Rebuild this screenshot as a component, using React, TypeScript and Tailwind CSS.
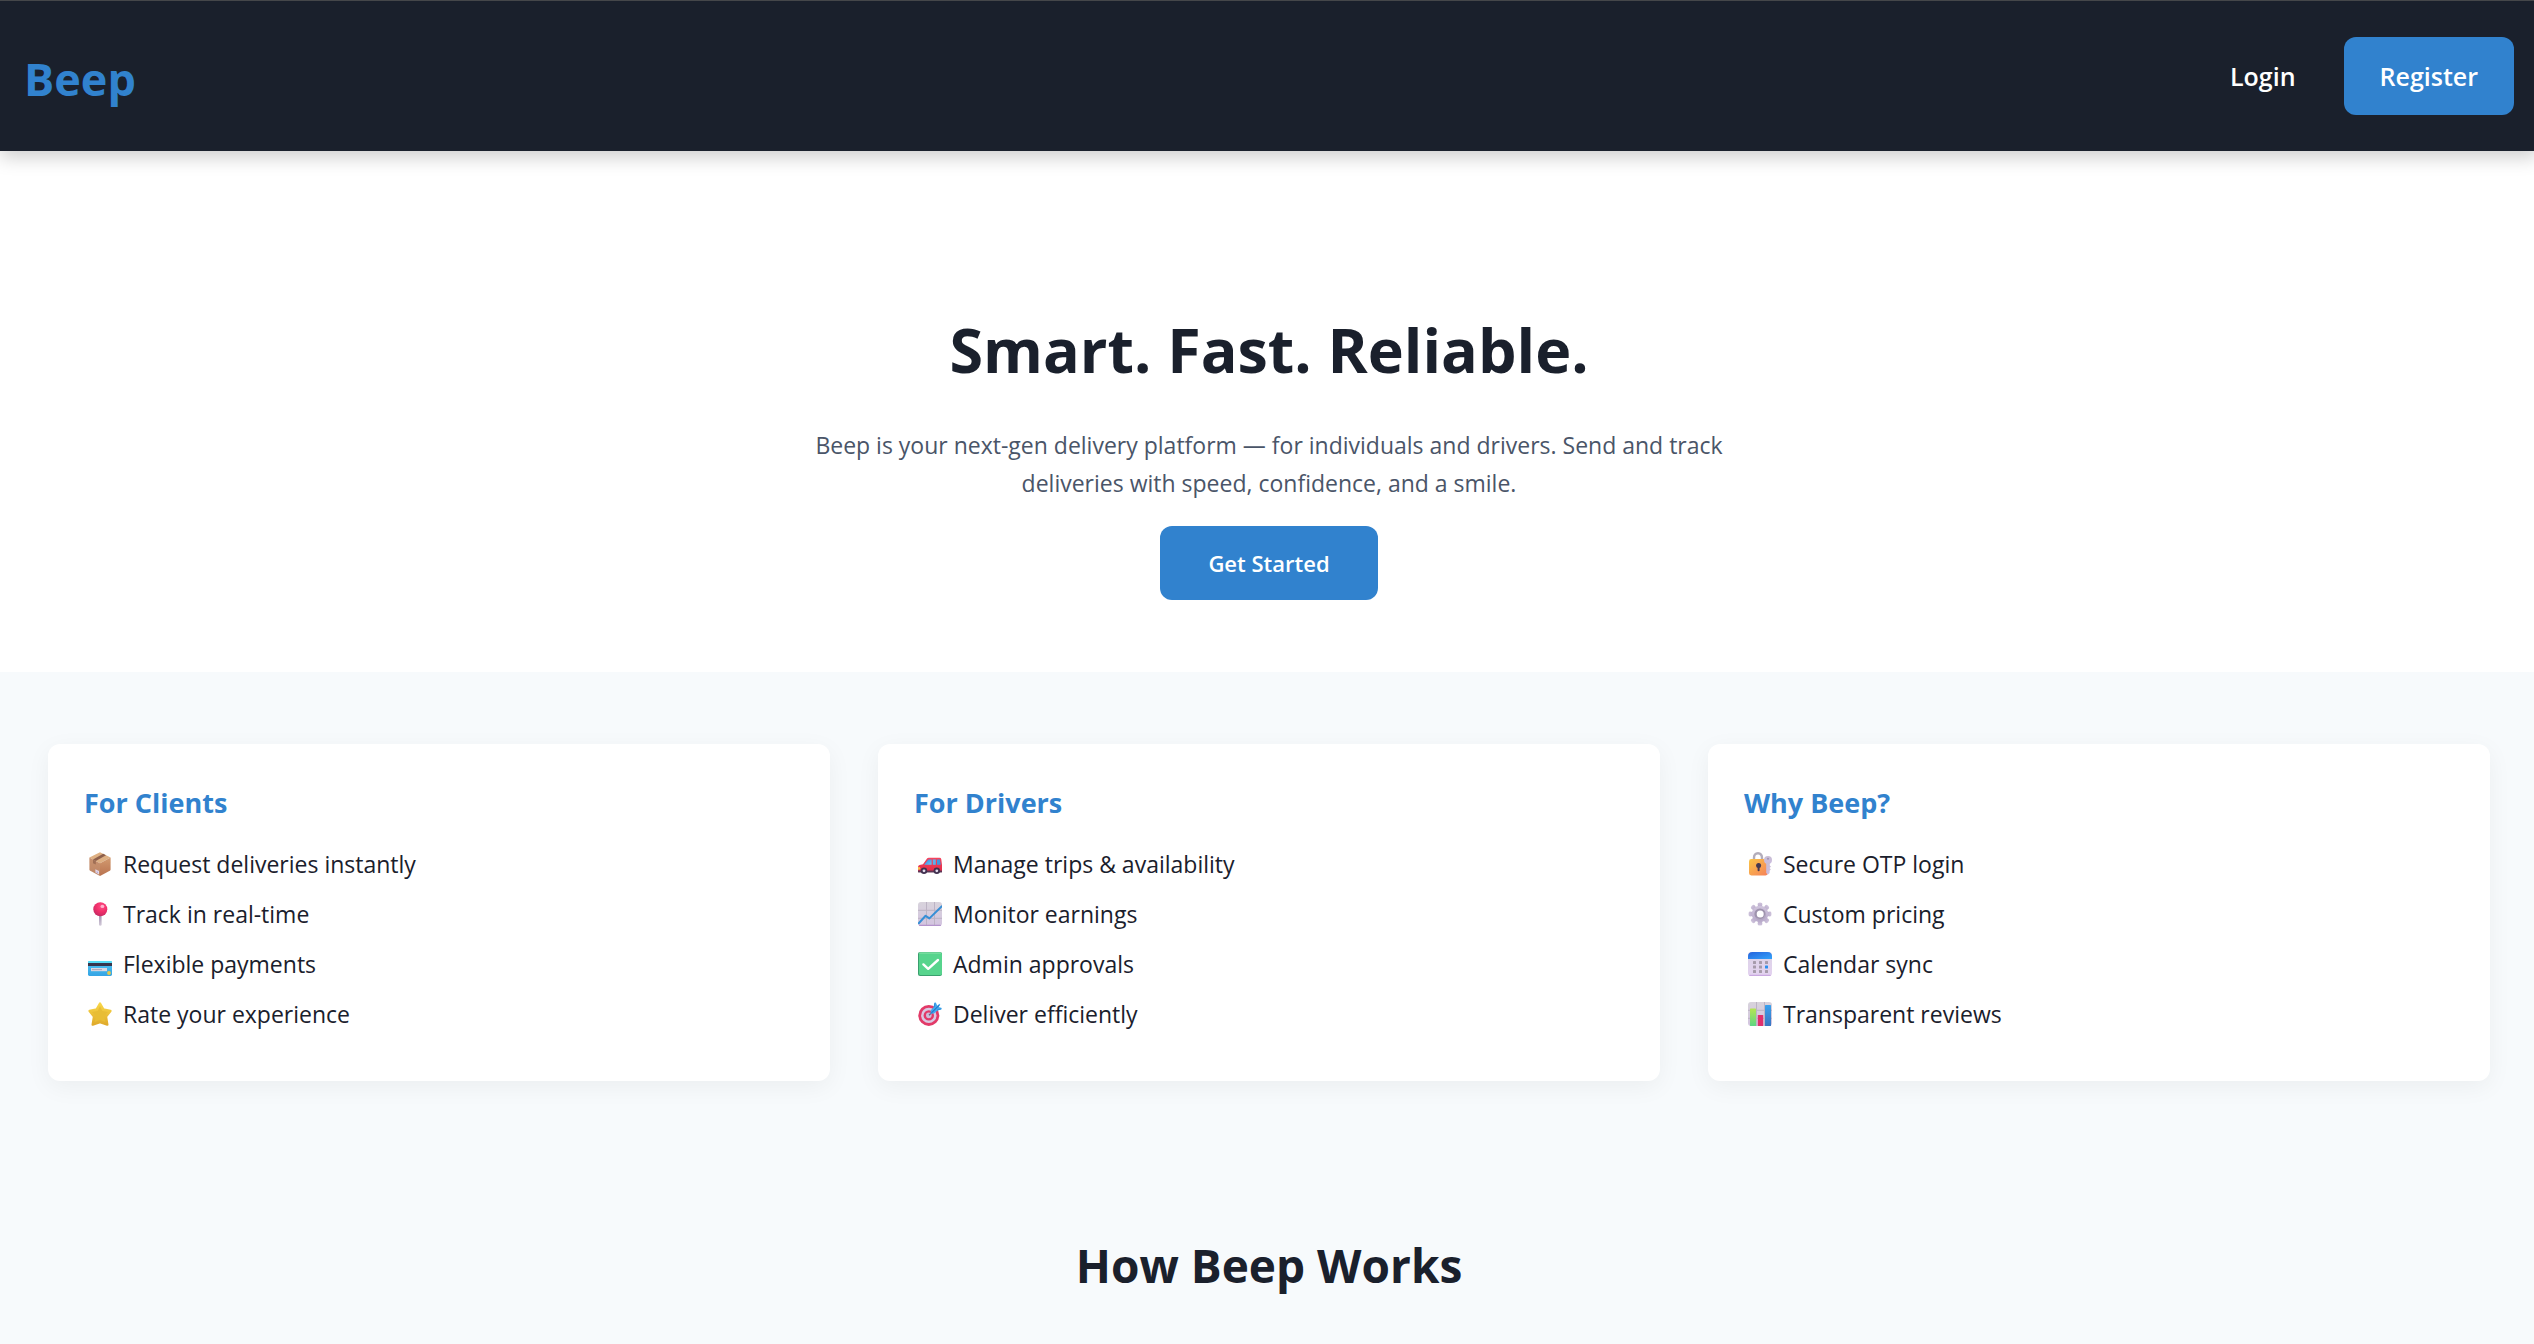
import type { ReactNode } from 'react';

function Gradient({ id, from, to, diagonal = false }: { id: string; from: string; to: string; diagonal?: boolean }) {
  return (
    <linearGradient id={id} x1="0" y1="0" x2={diagonal ? '1' : '0'} y2="1">
      <stop offset="0" stopColor={from} />
      <stop offset="1" stopColor={to} />
    </linearGradient>
  );
}

function Icon({ children }: { children: ReactNode }) {
  return (
    <svg viewBox="0 0 24 24" className="ml-1 size-6 shrink-0" aria-hidden="true">
      {children}
    </svg>
  );
}

const PackageIcon = () => (
  <Icon>
    <defs>
      <Gradient id="pkg-l" from="#c99370" to="#bd8565" />
      <Gradient id="pkg-r" from="#d29a6f" to="#b97350" />
    </defs>
    <path d="M12 0.2 22.6 5.6 12 11.2 1.4 5.6Z" fill="#deb083" />
    <path d="M1.4 5.6 12 11.2V24L2.2 18.8Q1.4 18.3 1.4 17.4Z" fill="url(#pkg-l)" />
    <path d="M22.6 5.6 12 11.2V24L21.8 18.8Q22.6 18.3 22.6 17.4Z" fill="url(#pkg-r)" />
    <path d="M15.2 1.8 18 3.2 7.8 9 5 7.5Z" fill="#8d5f4b" />
    <path d="M5 7.5 7.8 9V12.6L5 11.2Z" fill="#a06f55" />
    <path d="M7.4 17.2 11 19V22.4L7.4 20.6Z" fill="#e2d8ea" />
    <path d="M8.6 19.2 10 20V21.2L8.6 20.4Z" fill="#b9a6cf" />
  </Icon>
);

const PinIcon = () => (
  <Icon>
    <defs>
      <radialGradient id="pin-h" cx="0.6" cy="0.3" r="0.75">
        <stop offset="0" stopColor="#ff4f87" />
        <stop offset="0.5" stopColor="#f2306b" />
        <stop offset="1" stopColor="#c22a63" />
      </radialGradient>
      <Gradient id="pin-n" from="#9f8fae" to="#d3cbda" />
    </defs>
    <path d="M11 12h2.6v10.6q0 1.2-1.3 1.2T11 22.6Z" fill="url(#pin-n)" />
    <circle cx="12.3" cy="7.2" r="7" fill="url(#pin-h)" />
    <ellipse cx="14.4" cy="4.4" rx="1.9" ry="1.7" fill="#ffb3cd" />
  </Icon>
);

const CardIcon = () => (
  <Icon>
    <defs>
      <Gradient id="card-b" from="#4fc3f3" to="#35a4e4" />
    </defs>
    <rect x="0" y="9" width="24" height="15" rx="1.4" fill="url(#card-b)" />
    <path d="M1.4 9h21.2q1.4 0 1.4 1.4V11H0v-.6Q0 9 1.4 9Z" fill="#55dcf5" />
    <rect x="0" y="11" width="24" height="3" fill="#37354d" />
    <rect x="3" y="16" width="16" height="3.2" fill="#dcd9e2" />
    <rect x="4" y="17.2" width="10" height="0.9" fill="#a9a0b2" />
    <circle cx="21" cy="21" r="1.9" fill="#e9c94a" />
  </Icon>
);

const StarIcon = () => (
  <Icon>
    <defs>
      <Gradient id="star-f" from="#f8d648" to="#e0ab2c" />
    </defs>
    <path
      d="M12 1.6 15.3 7.4 22.4 8.9 18 14.6 19.3 22.6 12 20.2 4.7 22.6 6 14.6 1.6 8.9 8.7 7.4Z"
      fill="url(#star-f)"
      stroke="url(#star-f)"
      strokeWidth="2.4"
      strokeLinejoin="round"
    />
    <path d="M12 4 14.3 9 20 9.9 16.3 14 17.3 20 12 17.8 6.7 20 7.7 14 4 9.9 9.7 9Z" fill="#e8bd35" />
  </Icon>
);

const CarIcon = () => (
  <Icon>
    <defs>
      <Gradient id="car-b" from="#f5455f" to="#e22a48" />
      <Gradient id="car-w" from="#2f86dd" to="#6fc4f5" diagonal />
    </defs>
    <path d="M9.2 6.3Q9.8 5.8 10.6 5.8H21.6Q23 5.8 23.3 7.2L24 13V18.6Q24 19.8 22.8 19.8H1.4Q0 19.8 0 18.4V15Q0 13.4 1.6 13L5 12.3Z" fill="url(#car-b)" />
    <path d="M10.3 7.4H13.6V12.8H6.2Z" fill="url(#car-w)" />
    <path d="M14.8 7.4H17.8V12.8H14.8Z" fill="#58b1ee" />
    <path d="M19 7.4H21.9L22.7 12.8H19Z" fill="#3f97e0" />
    <path d="M0 15.2Q2.4 14.8 2.4 16.4T0 17.8Z" fill="#f9c04d" />
    <path d="M0 18.6H24V20Q24 20.6 23.2 20.6H.9Q0 20.6 0 20Z" fill="#5e3656" />
    <circle cx="6" cy="18.8" r="3.2" fill="#40304f" />
    <circle cx="6" cy="18.8" r="1.4" fill="#e4dcec" />
    <circle cx="18.8" cy="18.8" r="3.2" fill="#40304f" />
    <circle cx="18.8" cy="18.8" r="1.4" fill="#e4dcec" />
  </Icon>
);

const GridPaper = ({ id }: { id: string }) => (
  <>
    <defs>
      <Gradient id={id} from="#d8d3dc" to="#d3c4e0" />
    </defs>
    <rect width="24" height="24" rx="3" fill={`url(#${id})`} />
    <path d="M8.5 0V24M16.5 0V24M0 8.3H24M0 16.3H24" stroke="#bcb3c4" strokeWidth="1" fill="none" />
  </>
);

const ChartUpIcon = () => (
  <Icon>
    <GridPaper id="chart-up" />
    <path d="M1.600 23.3H22.4" stroke="#b394cc" strokeWidth="1.2" strokeLinecap="round" />
    <path d="M0.8 21.2 7.6 13.8 11.4 16.4 23.6 4.4" stroke="#368fd6" strokeWidth="2" fill="none" strokeLinejoin="round" strokeLinecap="round" />
  </Icon>
);

const CheckIcon = () => (
  <Icon>
    <rect width="24" height="24" rx="2" fill="#3a9f6e" />
    <rect x="1" y="0.6" width="23" height="22.4" rx="1.6" fill="#57d48d" />
    <path d="M1.5 1H22.5" stroke="#8fe6ad" strokeWidth="1" strokeLinecap="round" />
    <path d="M5.4 12.4 10.2 16.8 20 8" stroke="#fff" strokeWidth="2.4" fill="none" strokeLinecap="round" strokeLinejoin="round" />
  </Icon>
);

const TargetIcon = () => (
  <Icon>
    <circle cx="10.8" cy="13.4" r="10.5" fill="#e23a68" />
    <circle cx="10.8" cy="13.4" r="7.7" fill="#d9c9e2" />
    <circle cx="10.8" cy="13.4" r="5.2" fill="#e23a68" />
    <circle cx="10.8" cy="13.4" r="2.8" fill="#cdbdd8" />
    <path d="M11 13.3 14 10.4" stroke="#6b5a80" strokeWidth="1.2" />
    <path d="M12.4 11.8 12.8 8.3 15.8 5 16.2 0.8 17.8 0.6 19.3 3.8 21.4 1.8 22.3 2.8 20.6 5 23.8 6 23.4 7.6 19.6 8.4 16 11.6Z" fill="#42a9ee" />
    <path d="M13.4 10.8 21 3.4" stroke="#2477c9" strokeWidth="1.1" />
    <path d="M16 5.2 17 1.4M19 8.2 22.8 6.9" stroke="#2d86d4" strokeWidth="0.9" />
  </Icon>
);

const LockIcon = () => (
  <Icon>
    <defs>
      <Gradient id="lock-b" from="#fbc545" to="#f5805a" diagonal />
      <Gradient id="lock-k" from="#c9bdd3" to="#cbbde0" />
    </defs>
    <path d="M6 9V6Q6 1.3 10 1.3T14 6V9" stroke="#b3adba" strokeWidth="2.4" fill="none" />
    <rect x="1" y="7" width="19" height="16.4" rx="2.4" fill="url(#lock-b)" />
    <circle cx="10.6" cy="13.6" r="2.5" fill="#443750" />
    <path d="M9.6 14h2v4.5q0 .8-1 .8t-1-.8Z" fill="#443750" />
    <circle cx="20" cy="8" r="4" fill="url(#lock-k)" />
    <path d="M18.2 10.5H21.8V13.5L23 14.6 21.6 16 22.8 17.4 21.6 18.8V21L20 22.4 18.2 21Z" fill="url(#lock-k)" />
    <circle cx="20" cy="6.8" r="1" fill="#a192b0" />
  </Icon>
);

const GearIcon = () => (
  <Icon>
    <defs>
      <Gradient id="gear-b" from="#cfc4dc" to="#b9abcb" />
    </defs>
    {[0, 45, 90, 135, 180, 225, 270, 315].map((angle) => (
      <path key={angle} d="M10 5 9.6 2Q9.5 .5 12 .5T14.400 2L14 5Z" fill="url(#gear-b)" transform={`rotate(${angle} 12 12)`} />
    ))}
    <circle cx="12" cy="12" r="8.3" fill="url(#gear-b)" />
    <circle cx="12" cy="12" r="5.6" fill="#9f94ae" />
    <path d="M8 16A5.6 5.6 0 0 0 17.4 13.4" stroke="#b3a7c2" strokeWidth="1.5" fill="none" />
    <circle cx="12.2" cy="11.9" r="3.5" fill="#fff" />
  </Icon>
);

const CalendarIcon = () => (
  <Icon>
    <defs>
      <Gradient id="cal-h" from="#2563dd" to="#33a2fa" diagonal />
      <Gradient id="cal-b" from="#dcd4e6" to="#e3d2f0" />
    </defs>
    <rect width="24" height="24" rx="3" fill="url(#cal-b)" />
    <path d="M0 7V4.5Q0 0 4.5 0H19.5Q24 0 24 4.5V7Z" fill="url(#cal-h)" />
    <path d="M1.8 23.4H22.2" stroke="#c9a8e0" strokeWidth="1.1" strokeLinecap="round" />
    {[9, 13.5, 18].map((y) =>
      [5, 11, 17].map((x) => (
        <rect key={`${x}-${y}`} x={x} y={y} width="3" height="3" rx="0.5" fill={x === 17 && y === 13.5 ? '#2b90ee' : '#a69bab'} />
      )),
    )}
  </Icon>
);

const BarChartIcon = () => (
  <Icon>
    <defs>
      <Gradient id="bar-g" from="#b6e552" to="#5ed584" />
      <Gradient id="bar-b" from="#38a0ee" to="#3a74c0" />
    </defs>
    <GridPaper id="bar-paper" />
    <rect x="2" y="6.4" width="6" height="17.6" rx="0.6" fill="url(#bar-g)" />
    <rect x="9.8" y="13" width="5.4" height="11" rx="0.6" fill="#e02f6c" />
    <rect x="17" y="3" width="6" height="21" rx="0.6" fill="url(#bar-b)" />
  </Icon>
);

const cards = [
  {
    title: 'For Clients',
    items: [
      { Glyph: PackageIcon, label: 'Request deliveries instantly' },
      { Glyph: PinIcon, label: 'Track in real-time' },
      { Glyph: CardIcon, label: 'Flexible payments' },
      { Glyph: StarIcon, label: 'Rate your experience' },
    ],
  },
  {
    title: 'For Drivers',
    items: [
      { Glyph: CarIcon, label: 'Manage trips & availability' },
      { Glyph: ChartUpIcon, label: 'Monitor earnings' },
      { Glyph: CheckIcon, label: 'Admin approvals' },
      { Glyph: TargetIcon, label: 'Deliver efficiently' },
    ],
  },
  {
    title: 'Why Beep?',
    items: [
      { Glyph: LockIcon, label: 'Secure OTP login' },
      { Glyph: GearIcon, label: 'Custom pricing' },
      { Glyph: CalendarIcon, label: 'Calendar sync' },
      { Glyph: BarChartIcon, label: 'Transparent reviews' },
    ],
  },
];

export default function App() {
  return (
    <div className="overflow-x-hidden bg-[#f7fafc] font-['Open_Sans','Noto_Sans',sans-serif] text-[#1a202c]">
      <div className="-mr-1 flex min-h-screen flex-col">
        <header className="relative flex items-center justify-between border-t border-[#45474a] bg-[#1a202c] px-6 py-9 shadow-[0_6px_18px_rgba(0,0,0,0.2)]">
          <a href="#" className="mt-1.5 text-[45px] leading-[60px] font-bold text-[#3182ce]">
            Beep
          </a>
          <nav className="flex items-center gap-12 text-[25px] leading-[42px] font-semibold text-white">
            <a href="#login">Login</a>
            <a href="#register" className="rounded-xl bg-[#3182ce] px-9 py-[18px]">
              Register
            </a>
          </nav>
        </header>

        <main className="flex grow flex-col">
          <section className="flex flex-col items-center bg-white px-12 pt-36 pb-[72px] text-center">
            <h1 className="mb-[21px] text-[61px] leading-[110px] font-bold">Smart. Fast. Reliable.</h1>
            <p className="mb-6 max-w-[960px] text-[23px] leading-[38px] text-[#4a5568]">
              Beep is your next-gen delivery platform — for individuals and drivers. Send and track deliveries with speed, confidence, and a smile.
            </p>
            <button type="button" className="rounded-xl bg-[#3182ce] px-12 py-[18px] text-[22px] leading-[38px] font-semibold text-white">
              Get Started
            </button>
          </section>

          <section className="grid grid-cols-3 gap-12 px-12 py-[72px]">
            {cards.map(({ title, items }) => (
              <article key={title} className="rounded-xl bg-white p-9 shadow-[0_6px_24px_rgba(0,0,0,0.05)]">
                <h2 className="mb-[19px] text-[27px] leading-[46px] font-bold text-[#3182ce]">{title}</h2>
                <ul>
                  {items.map(({ Glyph, label }) => (
                    <li key={label} className="mb-3 flex items-center gap-[11px] text-[23px] leading-[38px]">
                      <Glyph />
                      {label}
                    </li>
                  ))}
                </ul>
              </article>
            ))}
          </section>

          <section className="px-12 pt-[72px] pb-6 text-center">
            <h2 className="text-[46px] leading-[80px] font-bold">How Beep Works</h2>
          </section>
        </main>
      </div>
    </div>
  );
}
